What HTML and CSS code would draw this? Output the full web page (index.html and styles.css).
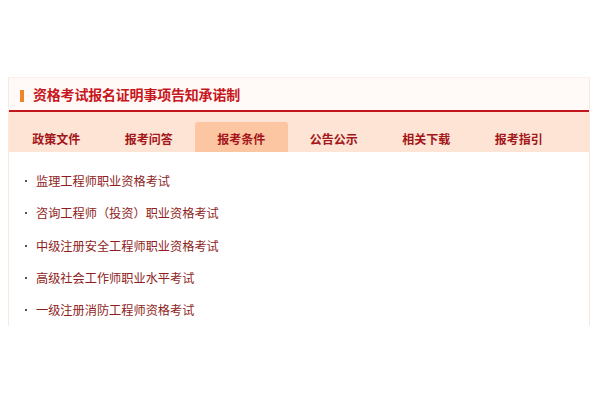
FILE: index.html
```html
<!DOCTYPE html>
<html lang="zh">
<head>
<meta charset="utf-8">
<link rel="stylesheet" href="styles.css">
</head>
<body>
<div class="panel">
  <div class="title-bar">
    <span class="mark"></span>
    <h2 class="title">资格考试报名证明事项告知承诺制</h2>
  </div>
  <ul class="tabs">
    <li class="tab">政策文件</li>
    <li class="tab">报考问答</li>
    <li class="tab active">报考条件</li>
    <li class="tab">公告公示</li>
    <li class="tab">相关下载</li>
    <li class="tab">报考指引</li>
  </ul>
  <ul class="list">
    <li class="item">监理工程师职业资格考试</li>
    <li class="item">咨询工程师（投资）职业资格考试</li>
    <li class="item">中级注册安全工程师职业资格考试</li>
    <li class="item">高级社会工作师职业水平考试</li>
    <li class="item">一级注册消防工程师资格考试</li>
  </ul>
</div>
</body>
</html>
```
FILE: styles.css
```css
* { box-sizing: border-box; }
html, body { margin: 0; padding: 0; background: #fff; }
body {
  font-family: "Noto Sans CJK SC", "Liberation Sans", sans-serif;
  padding-top: 77px;
}
.panel {
  margin: 0 10px 0 8px;
  border-left: 1px solid #f7e9e0;
  border-right: 1px solid #f7e9e0;
  height: 249px;
  background: #fff;
}
.title-bar {
  height: 35px;
  background: #fffaf7;
  border-top: 1px solid #fbefe7;
  border-bottom: 2px solid #c3161c;
  display: flex;
  align-items: center;
  padding-left: 11px;
}
.mark {
  width: 4px;
  height: 12px;
  background: #f0822a;
  margin-right: 9px;
  margin-top: 3px;
}
.title {
  margin: 0;
  font-size: 14px;
  font-weight: bold;
  color: #c8161d;
  line-height: 20px;
  letter-spacing: -0.2px;
}
.tabs {
  list-style: none;
  margin: 0;
  padding: 10px 0 0 1px;
  height: 40px;
  background: #fde4d4;
  display: flex;
}
.tab {
  width: 92.5px;
  height: 30px;
  display: flex;
  align-items: center;
  justify-content: center;
  padding-top: 3px;
  font-size: 12px;
  font-weight: bold;
  color: #a3161a;
  border-radius: 3px 3px 0 0;
}
.tab.active { background: #fdc6a3; }
.list {
  list-style: none;
  margin: 0;
  padding: 20px 0 0 16px;
}
.item {
  height: 32.3px;
  font-size: 12.2px;
  line-height: 18px;
  color: #8e1d22;
  display: flex;
  align-items: flex-start;
}
.item::before {
  content: "";
  width: 2px;
  height: 2px;
  background: #555;
  margin: 8px 9px 0 0;
  flex: none;
}
```
